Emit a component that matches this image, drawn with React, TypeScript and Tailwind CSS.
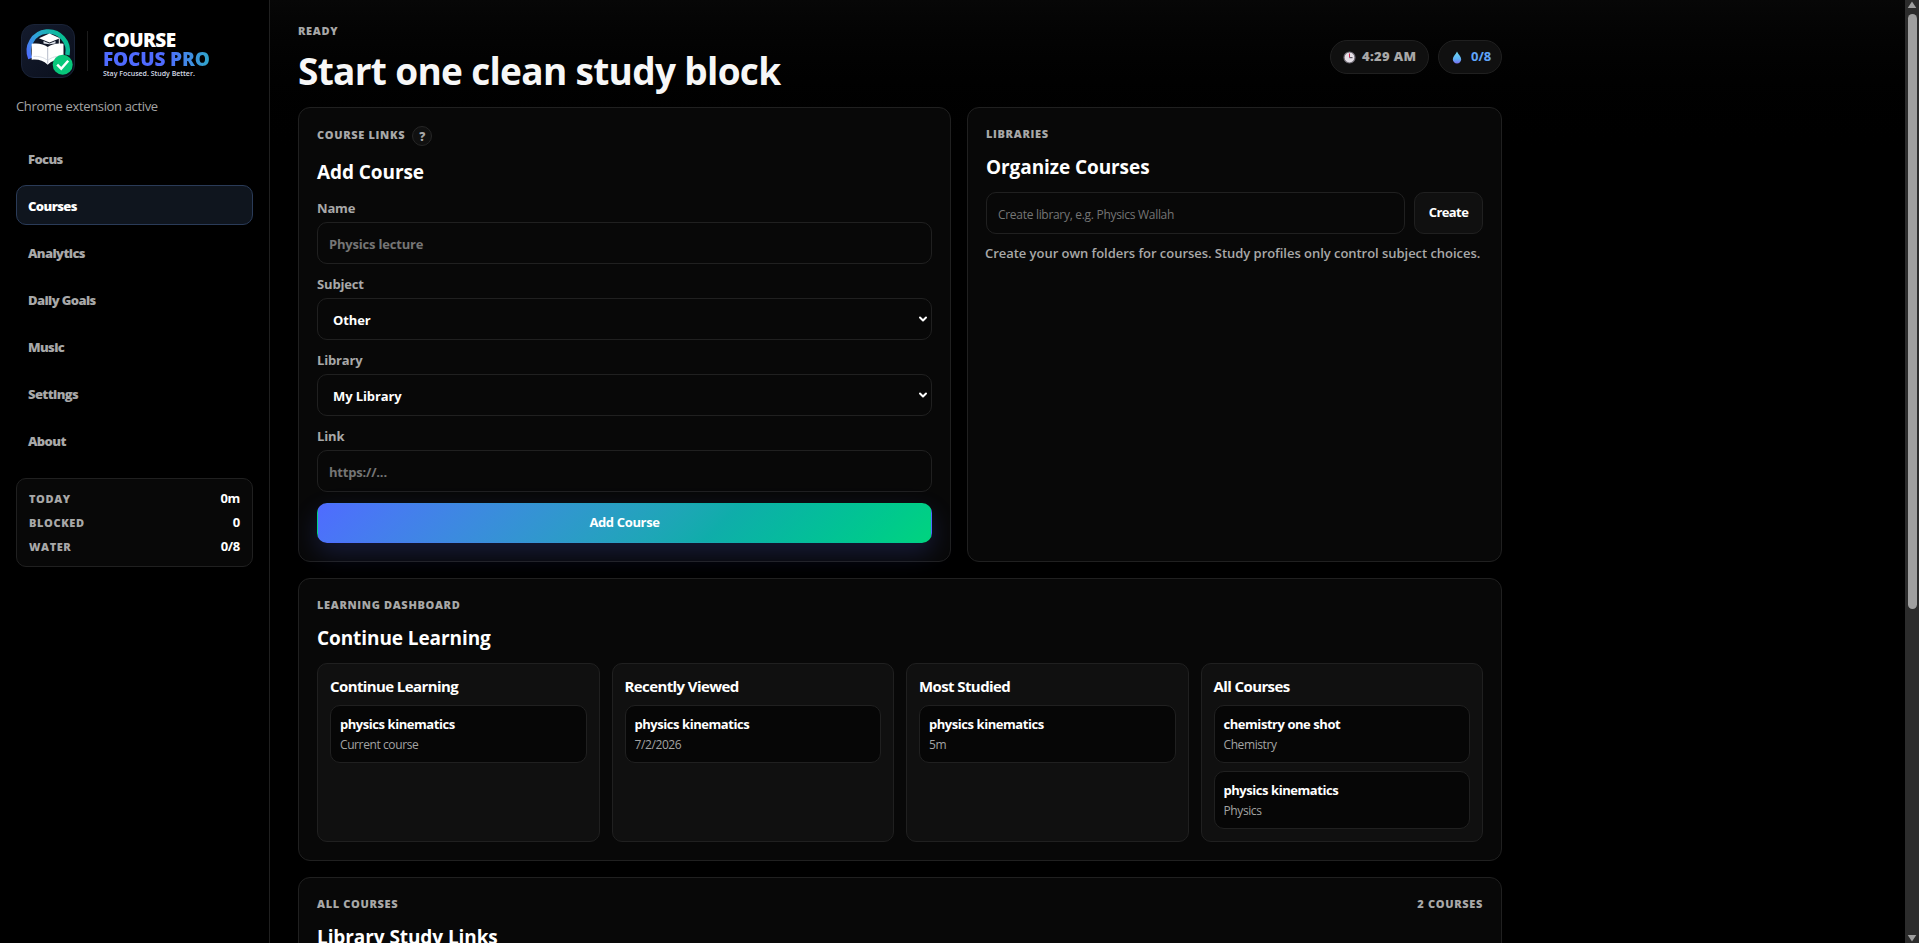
import { ChevronDown } from "lucide-react"
import clsx from "clsx"

const navItems = ["Focus", "Courses", "Analytics", "Daily Goals", "Music", "Settings", "About"]

const stats = [
  { label: "TODAY", value: "0m" },
  { label: "BLOCKED", value: "0" },
  { label: "WATER", value: "0/8" },
]

const boards = [
  { title: "Continue Learning", items: [{ name: "physics kinematics", detail: "Current course" }] },
  { title: "Recently Viewed", items: [{ name: "physics kinematics", detail: "7/2/2026" }] },
  { title: "Most Studied", items: [{ name: "physics kinematics", detail: "5m" }] },
  {
    title: "All Courses",
    items: [
      { name: "chemistry one shot", detail: "Chemistry" },
      { name: "physics kinematics", detail: "Physics" },
    ],
  },
]

function Logo() {
  return (
    <svg width="54" height="54" viewBox="0 0 54 54" fill="none">
      <defs>
        <linearGradient id="tile" x1="0" y1="0" x2="1" y2="1">
          <stop offset="0" stopColor="#141b2d" />
          <stop offset="1" stopColor="#0a0f1c" />
        </linearGradient>
        <linearGradient id="arc" x1="6" y1="32" x2="44" y2="14" gradientUnits="userSpaceOnUse">
          <stop offset="0" stopColor="#4f6bff" />
          <stop offset="0.4" stopColor="#2fa5d8" />
          <stop offset="1" stopColor="#06bf90" />
        </linearGradient>
      </defs>
      <rect x="0.5" y="0.5" width="53" height="53" rx="12.5" fill="url(#tile)" stroke="#1a2337" />
      <path d="M9.300 34.500A19.500 19.500 0 1 1 46.400 31" stroke="url(#arc)" strokeWidth="4.500" />
      <path d="M18 15v5h21v-5z" fill="#0d1424" />
      <path d="M28.500 9.500 39 14.200l-10.500 4.300-10.500-4.300z" fill="#fff" />
      <path d="M22.500 17v2.600l6 .6 6-.6V17l-6 2.400z" fill="#dfe4ec" />
      <path d="M38.300 14.500v6" stroke="#fff" />
      <path d="M10.700 19.800c6-1 12 0 16 3.200 4-3.200 10-4.200 15.800-3.200v16c-6-.8-11 .5-15.800 5-4.800-4.500-10-5.800-16-5z" fill="#fff" />
      <path d="M26.700 23.500v16" stroke="#b5bcc9" />
      <path d="M12.500 32.500c5-.5 10 .5 14.200 4 4-3.500 9-4.500 14-4" stroke="#cfd5df" strokeWidth="0.800" />
      <circle cx="41.700" cy="40.700" r="10" fill="#08c77a" />
      <path d="m36.200 40.700 4 4 7-8" stroke="#fff" strokeWidth="2.500" />
    </svg>
  )
}

function Sidebar() {
  return (
    <aside className="flex h-full w-[270px] shrink-0 flex-col border-r border-[#202020] bg-black px-4 pt-6">
      <div className="flex h-[54px] items-center pl-[5px]">
        <Logo />
        <div className="ml-3 h-10 w-px bg-[#1c1c1c]" />
        <div className="ml-[15px] flex flex-col items-start pt-2 whitespace-nowrap">
          <span className="text-[19px] leading-[19px] font-extrabold tracking-[-0.6px] text-white">COURSE</span>
          <span className="bg-linear-to-r from-[#4f6bff] from-60% to-[#2fa5c8] bg-clip-text text-[19px] leading-[19px] font-extrabold tracking-[-0.15px] text-transparent">
            FOCUS PRO
          </span>
          <span className="text-[7px] leading-[10px] font-semibold text-[#d5dbe6]">Stay Focused. Study Better.</span>
        </div>
      </div>
      <p className="mt-[18px] h-[21px] text-[13px] leading-5 tracking-[-0.35px] text-[#a3a3a3]">Chrome extension active</p>

      <nav className="mt-[21px] flex flex-col gap-[7px]">
        {navItems.map((item) => (
          <button
            key={item}
            className={clsx(
              "flex h-10 items-center rounded-[10px] border px-[11px] pt-[3px] text-[13px] font-extrabold tracking-[-0.6px]",
              item === "Courses" ? "border-[#2a3b58] bg-[#0f151e] text-white" : "border-transparent text-[#a8a8a8]"
            )}
          >
            {item}
          </button>
        ))}
      </nav>

      <div className="mt-[18px] flex flex-col gap-[9px] rounded-[10px] border border-[#202020] bg-[#080808] p-3">
        {stats.map((stat) => (
          <div key={stat.label} className="flex justify-between leading-[15px]">
            <span className="text-[11px] font-extrabold tracking-[0.055em] text-[#a8a8a8]">{stat.label}</span>
            <span className="text-[13px] font-bold tracking-[-0.3px] text-white">{stat.value}</span>
          </div>
        ))}
      </div>
    </aside>
  )
}

function Eyebrow({ children }: { children: string }) {
  return <p className="text-[11px] leading-[15px] font-extrabold tracking-[0.06em] text-[#a8a8a8]">{children}</p>
}

function PanelTitle({ children }: { children: string }) {
  return <h2 className="mt-3.5 text-[19px] leading-6 font-bold tracking-[-0.08px] text-white">{children}</h2>
}

function TextField({ label, placeholder }: { label: string; placeholder: string }) {
  return (
    <label className="flex flex-col gap-[5px]">
      <span className="pt-px text-[13px] leading-[18px] font-bold tracking-[-0.15px] text-[#a8a8a8]">{label}</span>
      <span className="flex h-[42px] items-center rounded-[10px] border border-[#202020] px-[11px] pt-[3px] text-[13px] font-bold tracking-[-0.2px] text-[#757575]">
        {placeholder}
      </span>
    </label>
  )
}

function SelectField({ label, value }: { label: string; value: string }) {
  return (
    <label className="flex flex-col gap-[5px]">
      <span className="pt-px text-[13px] leading-[18px] font-bold tracking-[-0.15px] text-[#a8a8a8]">{label}</span>
      <span className="flex h-[42px] items-center justify-between rounded-[10px] border border-[#202020] pr-[2px] pl-[15px] text-[13px] font-bold tracking-[-0.1px] text-white">
        <span className="pt-[3px]">{value}</span>
        <ChevronDown className="h-3 w-3" strokeWidth={4} />
      </span>
    </label>
  )
}

function ClockIcon() {
  return (
    <svg width="13" height="13" viewBox="0 0 13 13" fill="none">
      <circle cx="6.500" cy="6.500" r="5.500" fill="#e4dfe6" stroke="#6f6b74" strokeWidth="1.200" />
      <path d="M6.500 2.500v4" stroke="#d0264f" />
      <path d="M6.500 6.700h3" stroke="#3c3844" />
    </svg>
  )
}

function DropIcon() {
  return (
    <svg width="10" height="13" viewBox="0 0 10 13">
      <defs>
        <linearGradient id="drop" x1="0" y1="0" x2="0" y2="1">
          <stop offset="0" stopColor="#6fd8ee" />
          <stop offset="0.600" stopColor="#5fb4f6" />
          <stop offset="1" stopColor="#7a6df0" />
        </linearGradient>
      </defs>
      <path d="M5 .5C6 3 9.200 5.500 9.200 8.300A4.200 4.200 0 0 1 .8 8.300C.8 5.500 4 3 5 .5z" fill="url(#drop)" />
    </svg>
  )
}

function Header() {
  return (
    <header className="flex h-[84px] items-start justify-between">
      <div>
        <Eyebrow>READY</Eyebrow>
        <h1 className="mt-2.5 text-[37px] leading-[46px] font-bold tracking-[-0.68px] text-[#f7f7f7]">
          Start one clean study block
        </h1>
      </div>
      <div className="mt-[17px] flex gap-[9px]">
        <div className="flex h-[34px] w-[99px] items-center gap-1.5 rounded-full border border-[#202020] bg-[#101010] pl-3 text-[13px] font-extrabold tracking-[0.35px] whitespace-nowrap text-[#a8a8a8]">
          <ClockIcon />
          4:29 AM
        </div>
        <div className="flex h-[34px] w-16 items-center gap-[9px] rounded-full border border-[#202020] bg-[#101010] pl-[13px] text-[13px] font-bold text-[#60a5fa]">
          <DropIcon />
          0/8
        </div>
      </div>
    </header>
  )
}

function AddCoursePanel() {
  return (
    <section className="rounded-xl border border-[#202020] bg-[#080808] p-[18px]">
      <div className="flex h-5 items-center gap-[7px]">
        <div className="pb-[3px]">
          <Eyebrow>COURSE LINKS</Eyebrow>
        </div>
        <span className="flex h-5 w-5 items-center justify-center rounded-full border border-[#262626] bg-[#101010] pt-px text-[12px] font-extrabold text-[#a8a8a8]">
          ?
        </span>
      </div>
      <PanelTitle>Add Course</PanelTitle>
      <form className="mt-3.5 flex flex-col gap-2.5">
        <TextField label="Name" placeholder="Physics lecture" />
        <SelectField label="Subject" value="Other" />
        <SelectField label="Library" value="My Library" />
        <TextField label="Link" placeholder="https://..." />
        <button
          type="button"
          className="mt-px h-10 rounded-[10px] border border-transparent bg-linear-135 from-[#4f6bff] via-[#0fadaa] via-65% to-[#00d47e] text-[13px] font-bold tracking-[-0.35px] text-white shadow-[0_10px_26px_rgba(79,107,255,0.2)]"
        >
          Add Course
        </button>
      </form>
    </section>
  )
}

function LibrariesPanel() {
  return (
    <section className="rounded-xl border border-[#202020] bg-[#080808] p-[18px]">
      <Eyebrow>LIBRARIES</Eyebrow>
      <PanelTitle>Organize Courses</PanelTitle>
      <div className="mt-[13px] flex gap-[9px]">
        <div className="flex h-[42px] flex-1 items-center rounded-[10px] border border-[#202020] px-[11px] pt-[3px] text-[12px] tracking-[-0.3px] text-[#757575]">
          Create library, e.g. Physics Wallah
        </div>
        <button className="h-[42px] w-[69px] rounded-[10px] border border-[#202020] bg-[#101010] text-[13px] font-bold tracking-[-0.6px] text-white">
          Create
        </button>
      </div>
      <p className="-ml-px mt-2.5 text-[13px] leading-[18px] font-semibold tracking-[-0.04px] whitespace-nowrap text-[#a8a8a8]">
        Create your own folders for courses. Study profiles only control subject choices.
      </p>
    </section>
  )
}

function DashboardPanel() {
  return (
    <section className="rounded-xl border border-[#202020] bg-[#080808] p-[18px]">
      <Eyebrow>LEARNING DASHBOARD</Eyebrow>
      <PanelTitle>Continue Learning</PanelTitle>
      <div className="mt-[13px] grid grid-cols-4 gap-3">
        {boards.map((board) => (
          <div key={board.title} className="rounded-[10px] border border-[#202020] bg-[#101010] p-3">
            <h3 className="text-[15px] leading-5 font-bold tracking-[-0.6px] text-white">{board.title}</h3>
            <div className="mt-[9px] flex flex-col gap-2">
              {board.items.map((item) => (
                <div key={item.name} className="h-[58px] rounded-[10px] border border-[#202020] bg-[#060606] px-[9px] pt-[9px]">
                  <p className="text-[13px] leading-[18px] font-bold tracking-[-0.45px] text-white">{item.name}</p>
                  <p className="mt-1 text-[12px] leading-4 tracking-[-0.4px] text-[#a3a3a3]">{item.detail}</p>
                </div>
              ))}
            </div>
          </div>
        ))}
      </div>
    </section>
  )
}

function LinksPanel() {
  return (
    <section className="h-[200px] shrink-0 rounded-xl border border-[#202020] bg-[#080808] p-[18px]">
      <div className="flex justify-between">
        <Eyebrow>ALL COURSES</Eyebrow>
        <Eyebrow>2 COURSES</Eyebrow>
      </div>
      <PanelTitle>Library Study Links</PanelTitle>
    </section>
  )
}

function Scrollbar() {
  return (
    <div className="flex h-full w-3.5 shrink-0 flex-col items-center bg-[#2c2c2c]">
      <svg width="14" height="14" viewBox="0 0 14 14" fill="#9f9f9f">
        <path d="M7 1.500 11.300 8H2.700z" />
      </svg>
      <div className="h-[595px] w-[9px] rounded-full bg-[#9f9f9f]" />
      <svg className="mt-auto" width="14" height="10" viewBox="0 0 14 10" fill="#9f9f9f">
        <path d="M2.700 2h8.600L7 8.500z" />
      </svg>
    </div>
  )
}

export default function App() {
  return (
    <div className="flex h-screen overflow-hidden bg-black font-['Open_Sans','Noto_Sans',sans-serif]">
      <Sidebar />
      <main className="h-full flex-1 overflow-hidden bg-linear-to-b from-[#070707] to-black to-[170px] pt-[23px] pl-7">
        <div className="flex w-[1204px] flex-col gap-4">
          <div>
            <Header />
            <div className="grid h-[455px] grid-cols-[653px_535px] gap-4">
              <AddCoursePanel />
              <LibrariesPanel />
            </div>
          </div>
          <DashboardPanel />
          <LinksPanel />
        </div>
      </main>
      <Scrollbar />
    </div>
  )
}
